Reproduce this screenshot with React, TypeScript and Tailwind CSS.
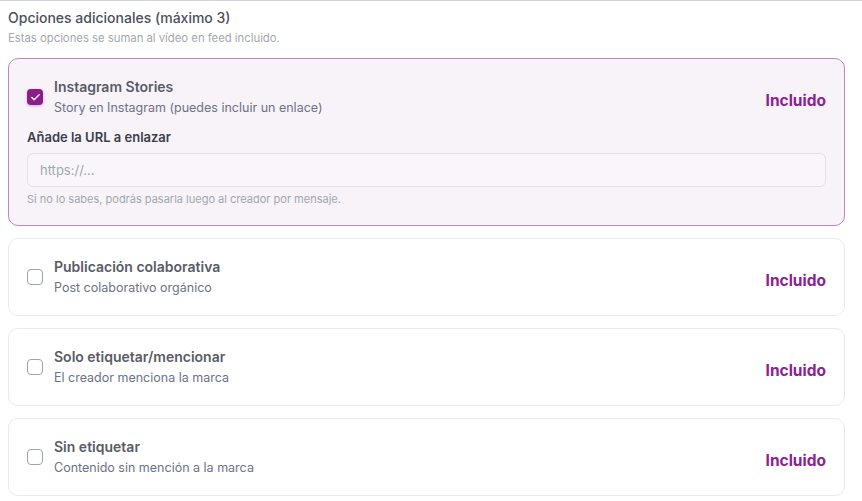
import { Check } from "lucide-react";

type Extra = {
  id: string;
  title: string;
  desc: string;
  withLink?: boolean;
};

const EXTRAS: Extra[] = [
  {
    id: "stories",
    title: "Instagram Stories",
    desc: "Story en Instagram (puedes incluir un enlace)",
    withLink: true,
  },
  { id: "collab", title: "Publicación colaborativa", desc: "Post colaborativo orgánico" },
  { id: "mention", title: "Solo etiquetar/mencionar", desc: "El creador menciona la marca" },
  { id: "none", title: "Sin etiquetar", desc: "Contenido sin mención a la marca" },
];

const selected = ["stories"];

const ExtraCard = ({ extra, checked }: { extra: Extra; checked: boolean }) => (
  <div
    className={`rounded-[10px] border px-[18px] pt-[18px] pb-[18px] ${
      checked ? "border-[#c183c6] bg-[#f8f2f9]" : "border-[#ebebee] bg-white"
    }`}
  >
    <div className="flex items-center gap-[11px]">
      <span
        className={`flex h-4 w-4 shrink-0 items-center justify-center rounded-[4px] ${
          checked ? "bg-[#8a1f8c] shadow-[0_1px_3px_rgba(138,31,140,0.35)]" : "border border-[#9ca3af] bg-white"
        }`}
      >
        {checked && <Check className="h-[11px] w-[11px] text-white" strokeWidth={3} />}
      </span>
      <div className="flex-1">
        <p className="text-[14px] leading-5 font-semibold text-[#585c66]">{extra.title}</p>
        <p className="mt-[2px] text-[12.5px] leading-[18px] text-[#6b7385]">{extra.desc}</p>
      </div>
      <span className="mt-[7px] text-[15.5px] font-bold text-[#8c2290]">Incluido</span>
    </div>

    {checked && extra.withLink && (
      <div className="mt-[11px]">
        <p className="text-[13px] leading-[18px] font-semibold text-[#3a3f4a]">Añade la URL a enlazar</p>
        <input
          type="text"
          placeholder="https://..."
          className="mt-[7px] h-[34px] w-full rounded-[6px] border border-[#e3e1e6] bg-[#f9f5fa] px-3 text-[13px] text-[#374151] outline-none placeholder:text-[#a3a7ae]"
        />
        <p className="mt-1 text-[11px] leading-4 text-[#a3a7ae]">
          Si no lo sabes, podrás pasarla luego al creador por mensaje.
        </p>
      </div>
    )}
  </div>
);

export default function App() {
  return (
    <div
      className="min-h-screen border-t border-[#d4d4d8] bg-white pl-2 pr-[17px] pt-[7px]"
      style={{ fontFamily: "Inter, 'Noto Sans', sans-serif" }}
    >
      <h3 className="text-[14px] leading-5 font-medium text-[#4b505a]">Opciones adicionales (máximo 3)</h3>
      <p className="mt-[2px] text-[11.3px] leading-4 text-[#a3a7ae]">Estas opciones se suman al vídeo en feed incluido.</p>

      <div className="mt-3 flex flex-col gap-3">
        {EXTRAS.map((extra) => (
          <ExtraCard key={extra.id} extra={extra} checked={selected.includes(extra.id)} />
        ))}
      </div>
    </div>
  );
}
